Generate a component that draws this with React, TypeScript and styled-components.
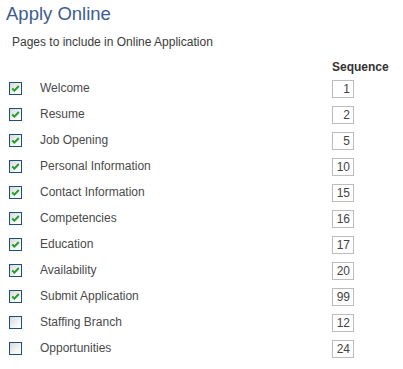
import styled, { createGlobalStyle } from "styled-components"

const GlobalStyle = createGlobalStyle`
    body {
        margin: 0;
        background: #ffffff;
        font-family: "Liberation Sans", Arial, sans-serif;
    }
`

const pages = [
    { label: "Welcome", seq: 1, checked: true },
    { label: "Resume", seq: 2, checked: true },
    { label: "Job Opening", seq: 5, checked: true },
    { label: "Personal Information", seq: 10, checked: true },
    { label: "Contact Information", seq: 15, checked: true },
    { label: "Competencies", seq: 16, checked: true },
    { label: "Education", seq: 17, checked: true },
    { label: "Availability", seq: 20, checked: true },
    { label: "Submit Application", seq: 99, checked: true },
    { label: "Staffing Branch", seq: 12, checked: false },
    { label: "Opportunities", seq: 24, checked: false },
]

const App = () => {
    return (
        <>
            <GlobalStyle />
            <StyledPage>
                <Title>Apply Online</Title>
                <Subtitle>Pages to include in Online Application</Subtitle>
                <PageGrid>
                    <HeaderCell />
                    <HeaderCell />
                    <HeaderCell>Sequence</HeaderCell>
                    {pages.map((p) => (
                        <Row key={p.label}>
                            <Cell>
                                <CheckBox>
                                    {p.checked && (
                                        <svg width="11" height="11" viewBox="0 0 11 11">
                                            <path
                                                d="M2.2 5.6 L4.4 7.6 L8.8 3"
                                                fill="none"
                                                stroke="#22a02a"
                                                strokeWidth="2"
                                            />
                                        </svg>
                                    )}
                                </CheckBox>
                            </Cell>
                            <Label>{p.label}</Label>
                            <Cell>
                                <SeqBox>{p.seq}</SeqBox>
                            </Cell>
                        </Row>
                    ))}
                </PageGrid>
            </StyledPage>
        </>
    )
}

const StyledPage = styled.div`
    padding: 3px 0 0 0;
    color: #444;
`

const Title = styled.h1`
    margin: 0 0 0 6px;
    font-size: 18.5px;
    line-height: 22px;
    font-weight: normal;
    color: #3d5d8e;
`

const Subtitle = styled.p`
    margin: 10px 0 0 12px;
    font-size: 12px;
    line-height: 14px;
    color: #3a3a3a;
`

const PageGrid = styled.div`
    display: grid;
    grid-template-columns: 31px 292px 60px;
    padding-left: 9px;
    margin-top: 11px;
`

const HeaderCell = styled.div`
    font-size: 12px;
    line-height: 14px;
    font-weight: bold;
    color: #333;
    margin-bottom: 1px;
`

const Row = styled.div`
    display: contents;
`

const Cell = styled.div`
    height: 26px;
    display: flex;
    align-items: center;
`

const Label = styled(Cell)`
    font-size: 12px;
    color: #4a4a4a;
`

const CheckBox = styled.span`
    box-sizing: border-box;
    width: 13px;
    height: 13px;
    border: 1px solid #1d4e7e;
    background: linear-gradient(135deg, #d8d8d8 0%, #f4f4f4 60%, #ffffff 100%);
    display: flex;
    align-items: center;
    justify-content: center;
`

const SeqBox = styled.div`
    box-sizing: border-box;
    width: 22px;
    height: 18px;
    border: 1px solid #bcbcbc;
    padding-right: 3px;
    text-align: right;
    font-size: 12px;
    line-height: 16px;
    color: #444;
    margin-top: 1px;
`

export default App
